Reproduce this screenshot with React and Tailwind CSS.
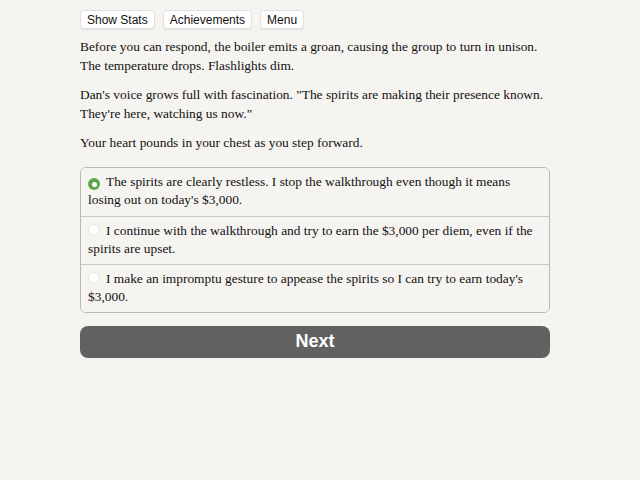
import React, { useState } from "react";

const serif = { fontFamily: '"Palatino Linotype", Palatino, "Book Antiqua", "Liberation Serif", serif' };

const choices = [
  "The spirits are clearly restless. I stop the walkthrough even though it means losing out on today's $3,000.",
  "I continue with the walkthrough and try to earn the $3,000 per diem, even if the spirits are upset.",
  "I make an impromptu gesture to appease the spirits so I can try to earn today's $3,000.",
];

function TopButton({ children }) {
  return (
    <button className="h-[19px] px-[6px] bg-white rounded-[4px] border border-[#e2e0dc] shadow-[0_1px_1px_rgba(0,0,0,0.08)] text-[12px] leading-none text-[#111] font-['Liberation_Sans',Arial,sans-serif]">
      {children}
    </button>
  );
}

export default function App() {
  const [picked, setPicked] = useState(0);

  return (
    <div className="min-h-[480px] w-full bg-[#f6f4f0] text-[#111]">
      <div className="w-[470px] ml-[80px] pt-[10px]">
        <div className="flex gap-[8px]">
          <TopButton>Show Stats</TopButton>
          <TopButton>Achievements</TopButton>
          <TopButton>Menu</TopButton>
        </div>

        <div style={serif} className="text-[13.4px] leading-[18.5px] mt-[9px]">
          <p>Before you can respond, the boiler emits a groan, causing the group to turn in unison. The temperature drops. Flashlights dim.</p>
          <p className="mt-[11px]">Dan's voice grows full with fascination. "The spirits are making their presence known. They're here, watching us now."</p>
          <p className="mt-[11px]">Your heart pounds in your chest as you step forward.</p>
        </div>

        <div style={serif} className="mt-[14px] border border-[#b9b8b4] rounded-[6px] overflow-hidden text-[13.4px] leading-[18px]">
          {choices.map((c, i) => (
            <label
              key={i}
              onClick={() => setPicked(i)}
              className={`block h-[48px] px-[7px] pt-[5px] bg-[#f6f4f0] ${i > 0 ? "border-t border-[#c8c7c3]" : ""}`}
            >
              <span className="inline-flex align-[-1px] mr-[6px]">
                {picked === i ? (
                  <span className="w-[12px] h-[12px] rounded-full bg-[#5fa84a] flex items-center justify-center">
                    <span className="w-[5px] h-[5px] rounded-full bg-white" />
                  </span>
                ) : (
                  <span className="w-[12px] h-[12px] rounded-full bg-white border border-[#e4e2de]" />
                )}
              </span>
              {c}
            </label>
          ))}
        </div>

        <button className="mt-[13px] w-full h-[32px] rounded-[8px] bg-[#616161] text-white text-[18px] font-bold font-['Liberation_Sans',Arial,sans-serif]">
          Next
        </button>
      </div>
    </div>
  );
}
